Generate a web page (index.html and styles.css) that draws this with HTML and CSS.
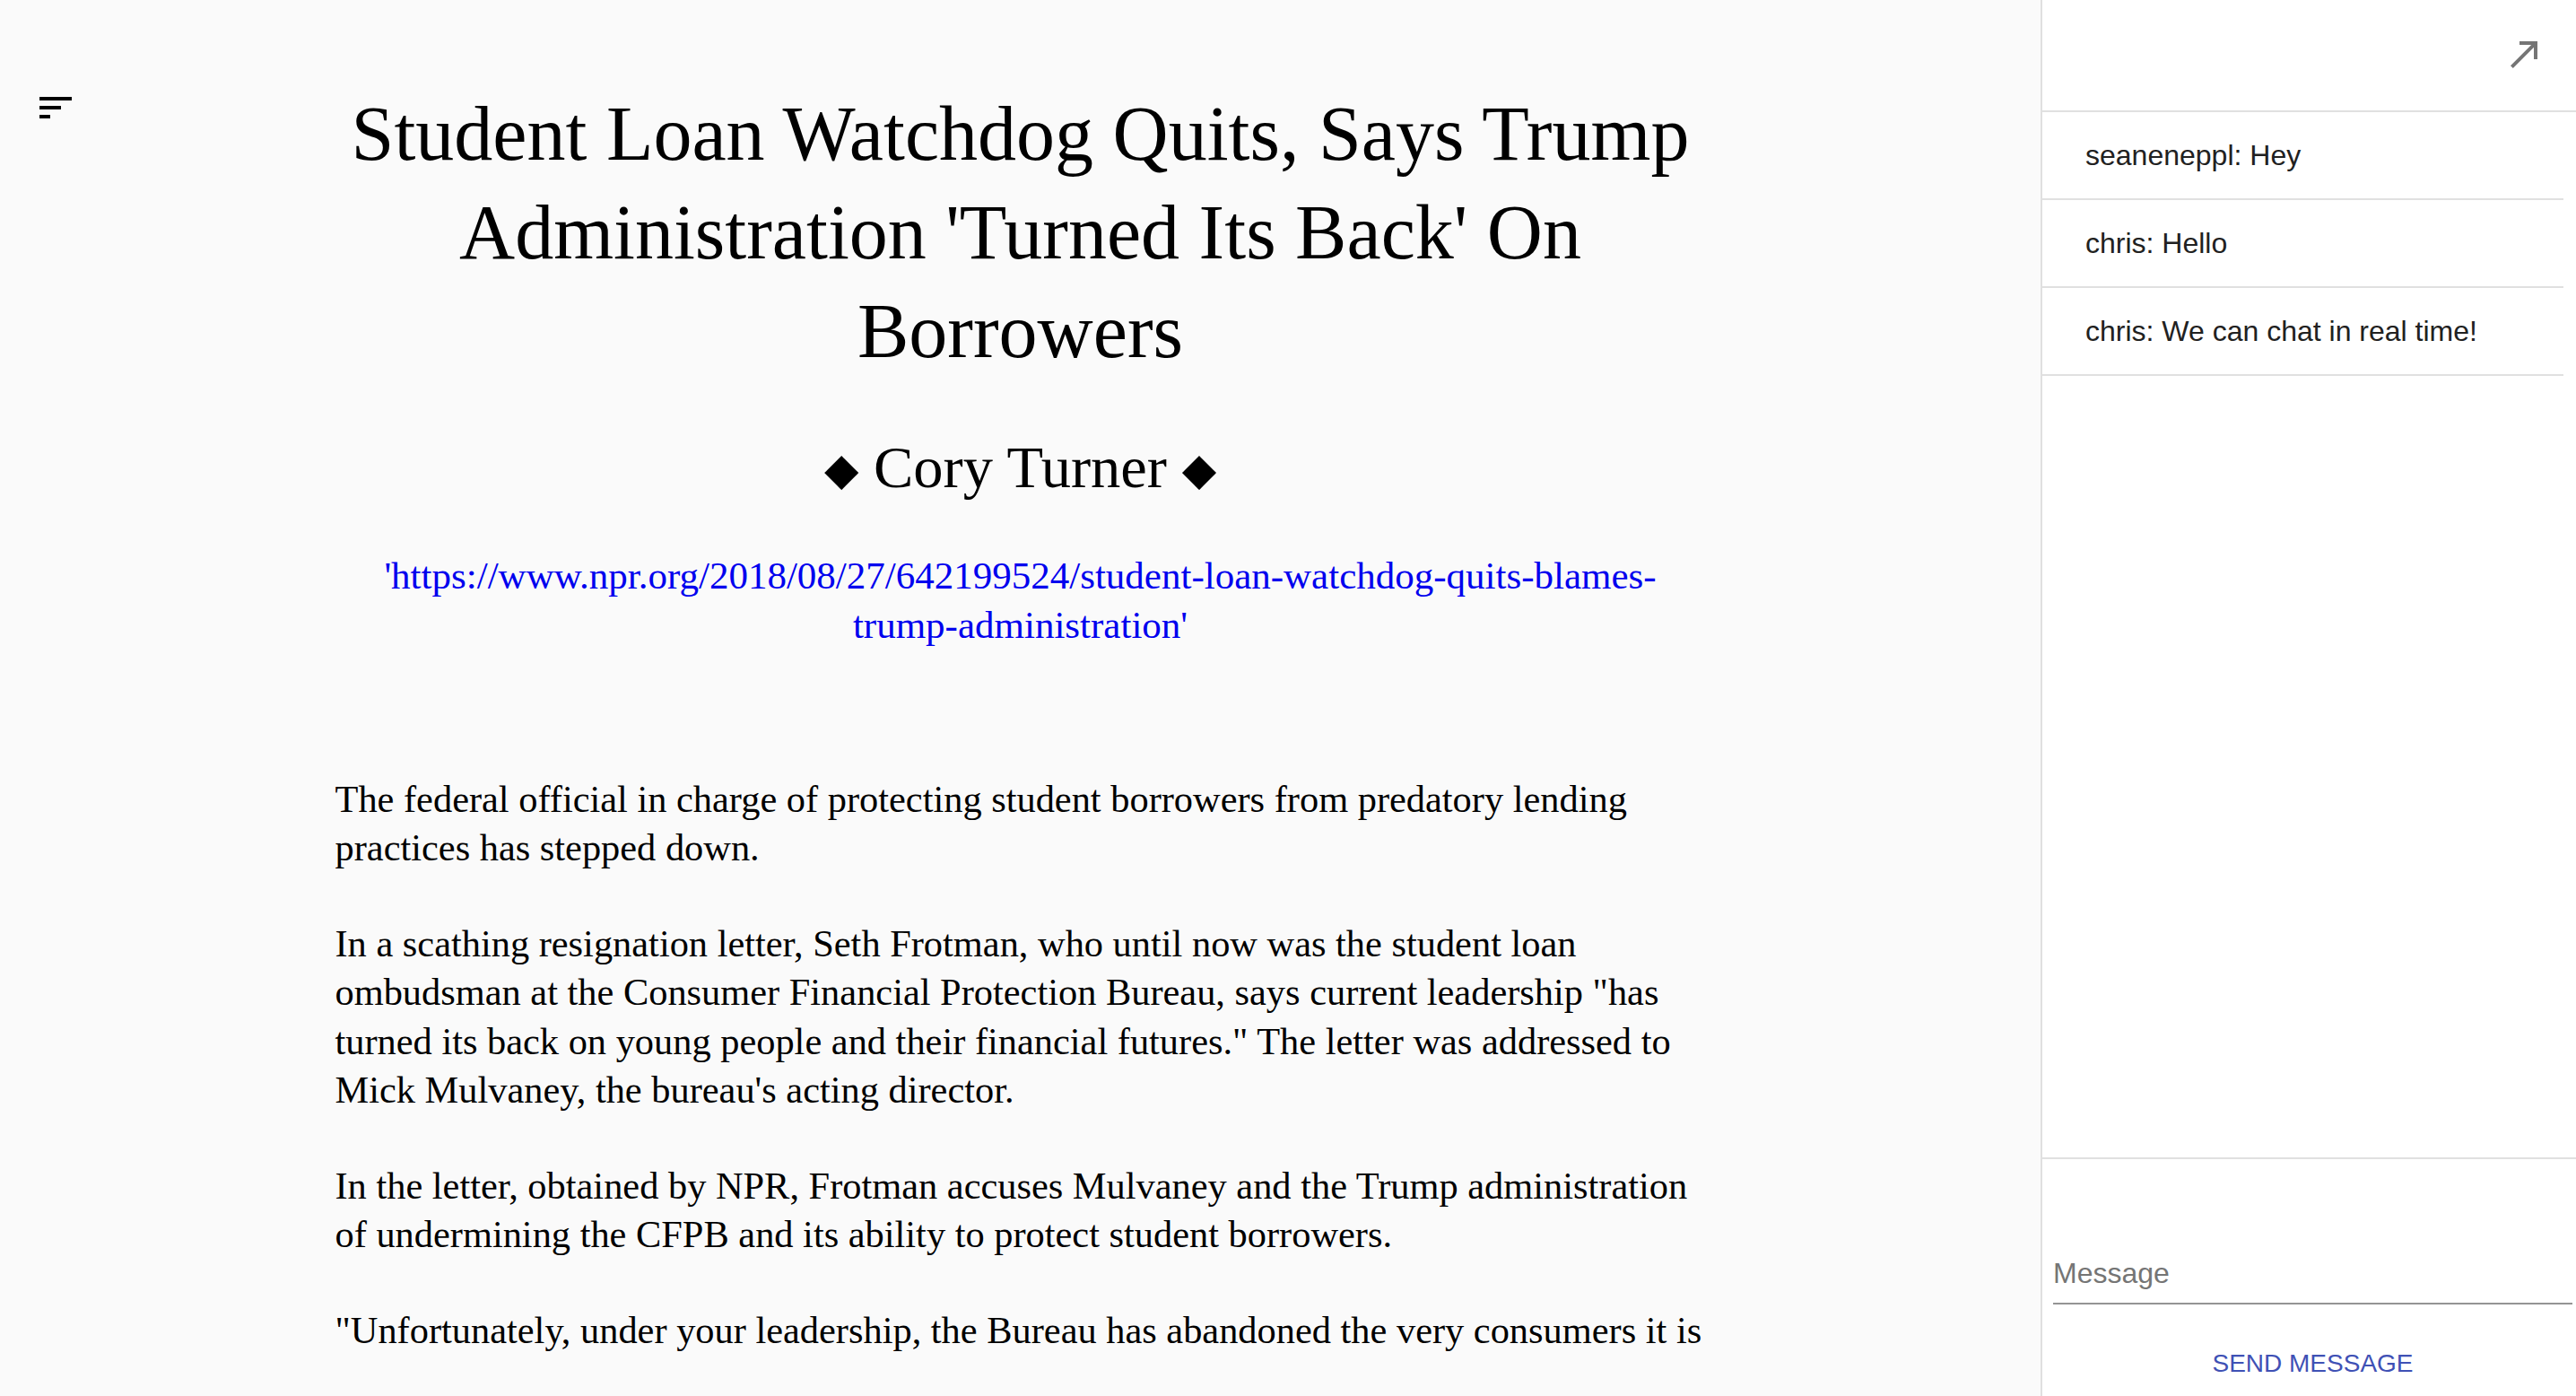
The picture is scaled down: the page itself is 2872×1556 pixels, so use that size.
FILE: index.html
```html
<!DOCTYPE html>
<html lang="en">
<head>
<meta charset="utf-8">
<title>Student Loan Watchdog Quits</title>
<link rel="stylesheet" href="styles.css">
</head>
<body>
<div class="app">
  <main class="reader">
    <div class="menu-col">
      <button class="icon-btn menu-btn" aria-label="Menu">
        <svg viewBox="0 0 24 24" width="48" height="48"><path d="M3 18h6v-2H3v2zM3 6v2h18V6H3zm0 7h12v-2H3v2z"/></svg>
      </button>
    </div>
    <article class="story">
      <h1 class="title">Student Loan Watchdog Quits, Says Trump Administration 'Turned Its Back' On Borrowers</h1>
      <h2 class="byline"><span class="diamond">◆</span> Cory Turner <span class="diamond">◆</span></h2>
      <a class="source" href="#">'https://www.npr.org/2018/08/27/642199524/student-loan-watchdog-quits-blames-trump-administration'</a>
      <div class="story-body">
        <p>The federal official in charge of protecting student borrowers from predatory lending practices has stepped down.</p>
        <p>In a scathing resignation letter, Seth Frotman, who until now was the student loan ombudsman at the Consumer Financial Protection Bureau, says current leadership "has turned its back on young people and their financial futures." The letter was addressed to Mick Mulvaney, the bureau's acting director.</p>
        <p>In the letter, obtained by NPR, Frotman accuses Mulvaney and the Trump administration of undermining the CFPB and its ability to protect student borrowers.</p>
        <p>"Unfortunately, under your leadership, the Bureau has abandoned the very consumers it is</p>
      </div>
    </article>
  </main>
  <aside class="chat">
    <header class="chat-head">
      <button class="icon-btn pop-btn" aria-label="Open in new window">
        <svg viewBox="0 0 24 24" width="48" height="48"><path d="M9 5v2h6.59L4 18.59 5.41 20 17 8.41V15h2V5z"/></svg>
      </button>
    </header>
    <ul class="messages">
      <li class="message">seaneneppl: Hey</li>
      <li class="message">chris: Hello</li>
      <li class="message">chris: We can chat in real time!</li>
    </ul>
    <form class="composer">
      <input class="msg-input" type="text" placeholder="Message">
      <button class="send-btn" type="button">Send Message</button>
    </form>
  </aside>
</div>
</body>
</html>
```

FILE: styles.css
```css
html, body {
  margin: 0;
  padding: 0;
  height: 100%;
}

body {
  background: #fafafa;
  color: #000;
  font-family: "Liberation Serif", "Times New Roman", serif;
}

.app {
  display: grid;
  grid-template-columns: 1fr 597px;
  height: 1556px;
  overflow: hidden;
}

/* ---------- reader ---------- */
.reader {
  display: grid;
  grid-template-columns: 1fr 1528px 1fr;
  align-content: start;
  height: 1556px;
  overflow: hidden;
  background: #fafafa;
}

.icon-btn {
  border: 0;
  background: transparent;
  padding: 0;
  margin: 0;
  display: block;
  cursor: pointer;
}

.icon-btn svg {
  display: block;
}

.menu-col {
  padding: 96px 0 0 38px;
}

.menu-btn svg {
  fill: #000;
}

.story {
  padding-top: 94px;
}

.title {
  margin: 0;
  font-size: 86px;
  line-height: 110px;
  font-weight: normal;
  text-align: center;
}

.byline {
  margin: 58px 0 0;
  font-size: 66.5px;
  line-height: 78px;
  font-weight: normal;
  text-align: center;
}

.diamond {
  font-family: "DejaVu Sans", sans-serif;
  font-size: 50px;
  line-height: 0;
  vertical-align: 3px;
}

.source {
  display: block;
  margin-top: 55px;
  font-size: 43px;
  line-height: 54.5px;
  color: #0000ee;
  text-decoration: none;
  text-align: center;
}

.story-body {
  margin-top: 139.5px;
  font-size: 42.4px;
  line-height: 54.5px;
}

.story-body p {
  margin: 0 0 52px;
}

/* ---------- chat ---------- */
.chat {
  display: flex;
  flex-direction: column;
  background: #fff;
  border-left: 2px solid #e0e0e0;
  font-family: "Liberation Sans", Arial, sans-serif;
  min-height: 0;
}

.chat-head {
  height: 125px;
  border-bottom: 2px solid #e0e0e0;
  display: flex;
  justify-content: flex-end;
  align-items: flex-start;
  padding: 36px 33px 0 0;
  box-sizing: border-box;
  flex: none;
}

.pop-btn svg {
  fill: #757575;
}

.messages {
  list-style: none;
  margin: 0 14px 0 0;
  padding: 0;
  flex: 1;
  min-height: 0;
}

.message {
  padding: 24px 48px;
  font-size: 32px;
  line-height: 48px;
  color: #212121;
  border-bottom: 2px solid #e0e0e0;
}

.composer {
  flex: none;
  border-top: 2px solid #e0e0e0;
  padding: 96px 4px 0 12px;
  display: flex;
  flex-direction: column;
}

.msg-input {
  display: block;
  width: 100%;
  box-sizing: content-box;
  height: 38px;
  padding: 12px 0 14px;
  margin: 0;
  border: 0;
  border-bottom: 2px solid #949494;
  background: transparent;
  font-family: "Liberation Sans", Arial, sans-serif;
  font-size: 32px;
  color: #212121;
  outline: none;
}

.msg-input::placeholder {
  color: #757575;
  opacity: 1;
}

.send-btn {
  align-self: center;
  margin-top: 22px;
  padding: 28px 32px 20px;
  border: 0;
  background: transparent;
  font-family: "Liberation Sans", Arial, sans-serif;
  font-size: 28px;
  line-height: 32px;
  color: #3f51b5;
  text-transform: uppercase;
  cursor: pointer;
}
```
